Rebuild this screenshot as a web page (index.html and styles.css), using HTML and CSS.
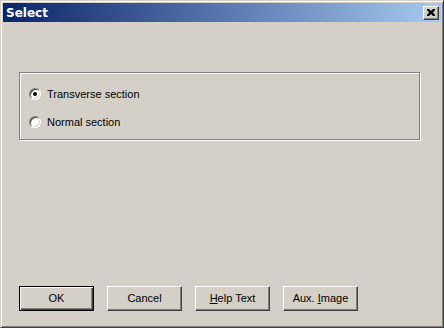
FILE: index.html
```html
<!DOCTYPE html>
<html lang="en">
    <head>
        <title>Select</title>
        <link rel="stylesheet" href="styles.css">
    </head>
    <body>
        <div class="window">
            <div class="titlebar">
                <span class="title">Select</span>
                <span class="close-btn">
                    <svg width="8" height="7" viewBox="0 0 8 7"><path d="M0 0h2l2 2 2-2h2v1l-2 2.5 2 2.5v1h-2l-2-2-2 2h-2v-1l2-2.5-2-2.5z" fill="#000"/></svg>
                </span>
            </div>
            <div class="content">
                <div class="group">
                    <label class="radio-row">
                        <span class="radio checked"></span>
                        <span>Transverse section</span>
                    </label>
                    <label class="radio-row">
                        <span class="radio"></span>
                        <span>Normal section</span>
                    </label>
                </div>
                <div class="buttons">
                    <span class="btn default"><span class="btn-face"><span>OK</span></span></span>
                    <span class="btn"><span class="btn-face"><span>Cancel</span></span></span>
                    <span class="btn"><span class="btn-face"><span><u>H</u>elp Text</span></span></span>
                    <span class="btn"><span class="btn-face"><span>Aux. <u>I</u>mage</span></span></span>
                </div>
            </div>
        </div>
    </body>
</html>
```

FILE: styles.css
```css
body {
    margin: 0;
    background: #d4d0c8;
    font-family: "Liberation Sans", Arial, sans-serif;
    font-size: 11px;
    color: #000;
}
.window {
    box-sizing: border-box;
    width: 444px;
    height: 328px;
    border: 1px solid;
    border-color: #d4d0c8 #404040 #404040 #d4d0c8;
    box-shadow: inset 1px 1px #fff, inset -1px -1px #808080;
    padding: 2px;
    display: flex;
    flex-direction: column;
}
.titlebar {
    height: 19px;
    background: linear-gradient(to right, #0a246a, #a6caf0);
    display: flex;
    align-items: center;
    justify-content: space-between;
    padding: 0 2px 0 3px;
}
.title {
    color: #fff;
    font-family: "DejaVu Sans", sans-serif;
    font-weight: bold;
    font-size: 12px;
}
.close-btn {
    box-sizing: border-box;
    width: 16px;
    height: 14px;
    background: #d4d0c8;
    border: 1px solid;
    border-color: #fff #404040 #404040 #fff;
    box-shadow: inset -1px -1px #808080;
    display: flex;
    align-items: center;
    justify-content: center;
    padding: 0 1px 1px 0;
}
.close-btn svg {
    display: block;
}
.content {
    flex: 1;
    display: flex;
    flex-direction: column;
    justify-content: space-between;
    padding: 50px 0 14px 16px;
}
.group {
    box-sizing: border-box;
    width: 401px;
    height: 68px;
    border: 1px solid #808080;
    box-shadow: inset 1px 1px #fff, 1px 1px #fff;
    padding: 14px 0 0 9px;
    display: flex;
    flex-direction: column;
    gap: 15px;
}
.radio-row {
    display: flex;
    align-items: center;
    gap: 6px;
    height: 13px;
}
.radio {
    box-sizing: border-box;
    width: 12px;
    height: 12px;
    border-radius: 50%;
    border: 1px solid;
    border-color: #808080 #fff #fff #808080;
    box-shadow: inset 1px 1px #404040, inset -1px -1px #d4d0c8;
    background: #fff;
    display: flex;
    align-items: center;
    justify-content: center;
}
.radio.checked::after {
    content: "";
    width: 4px;
    height: 4px;
    border-radius: 50%;
    background: #000;
}
.buttons {
    display: flex;
    gap: 13px;
}
.btn {
    box-sizing: border-box;
    width: 75px;
    height: 25px;
    border: 1px solid;
    border-color: #fff #404040 #404040 #fff;
    box-shadow: inset -1px -1px #808080;
    display: flex;
}
.btn.default {
    border: 1px solid #000;
    box-shadow: inset 1px 1px #fff, inset -1px -1px #404040, inset -2px -2px #808080;
}
.btn-face {
    flex: 1;
    display: flex;
    align-items: center;
    justify-content: center;
    padding-bottom: 1px;
}
.btn-face u {
    text-underline-offset: 1px;
}
```
